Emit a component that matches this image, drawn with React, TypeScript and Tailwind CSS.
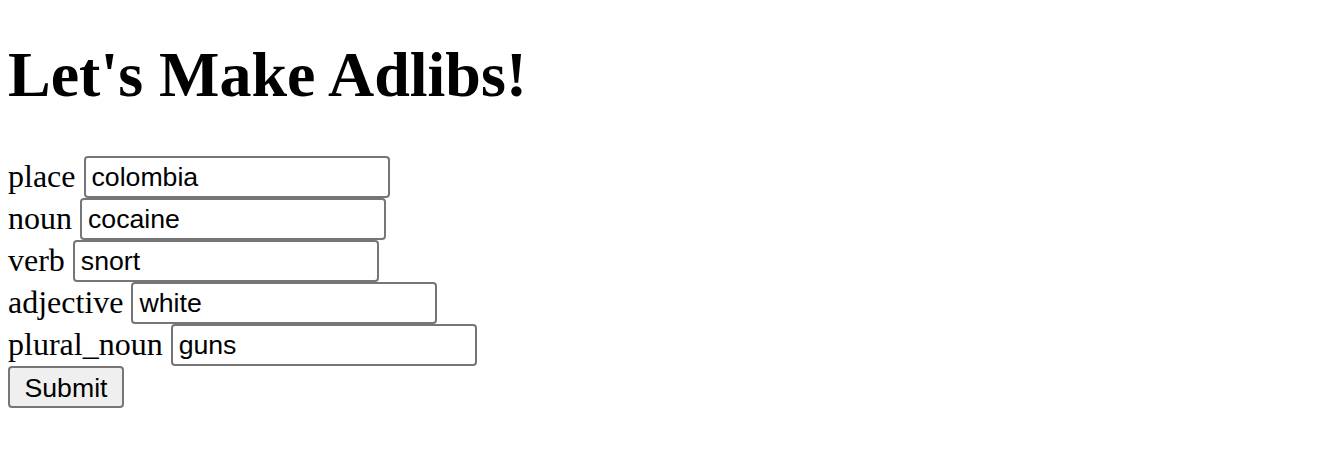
import { useState } from "react";

const fields = [
  { name: "place", value: "colombia" },
  { name: "noun", value: "cocaine" },
  { name: "verb", value: "snort" },
  { name: "adjective", value: "white" },
  { name: "plural_noun", value: "guns" },
];

export default function App() {
  const [values, setValues] = useState<Record<string, string>>(
    Object.fromEntries(fields.map((f) => [f.name, f.value]))
  );

  return (
    <div className="min-h-[452px] bg-white px-2 text-black font-['Liberation_Serif',serif]">
      <h1 className="pt-[38px] mb-[44px] text-[64px] leading-[74px] font-bold">Let's Make Adlibs!</h1>
      <form onSubmit={(e) => e.preventDefault()}>
        {fields.map((f) => (
          <div key={f.name} className="flex h-[42px] items-center gap-2 text-[32px] leading-[42px]">
            <label htmlFor={f.name} className="relative -top-[1px]">
              {f.name}
            </label>
            <input
              id={f.name}
              value={values[f.name]}
              onChange={(e) => setValues({ ...values, [f.name]: e.target.value })}
              className="h-[42px] w-[306px] rounded-[4px] border-2 border-[#767676] bg-white px-[6px] text-[26.67px] leading-none font-['Liberation_Sans',sans-serif] outline-none"
            />
          </div>
        ))}
        <button
          type="submit"
          className="h-[42px] w-[116px] rounded-[4px] border-2 border-[#767676] bg-[#efefef] text-[26.67px] font-['Liberation_Sans',sans-serif]"
        >
          Submit
        </button>
      </form>
    </div>
  );
}
